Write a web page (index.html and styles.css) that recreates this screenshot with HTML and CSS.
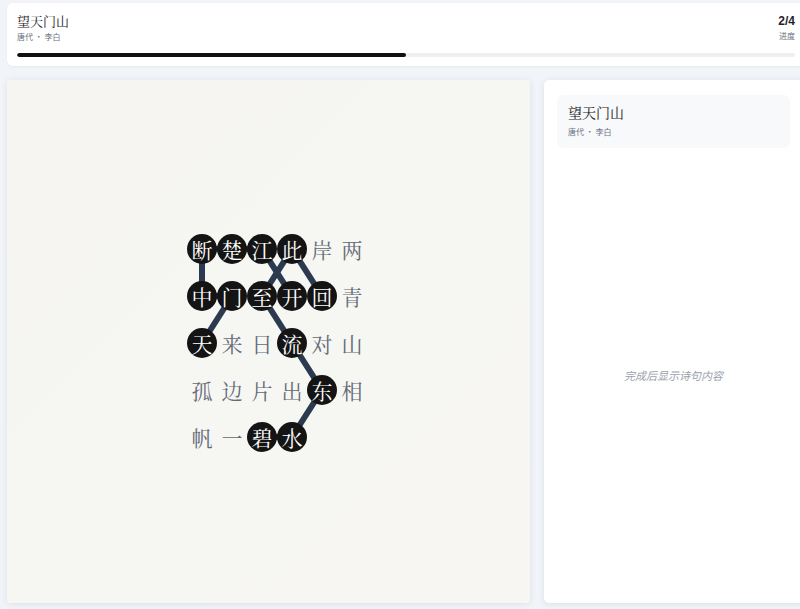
FILE: index.html
```html
<!DOCTYPE html>
<html lang="zh">
<head>
<meta charset="utf-8">
<link rel="stylesheet" href="styles.css">
</head>
<body>
<div class="page">
  <header class="top">
    <div class="top-row">
      <div class="info">
        <div class="title">望天门山</div>
        <div class="meta">唐代 · 李白</div>
      </div>
      <div class="progress-text">
        <div class="count">2/4</div>
        <div class="label">进度</div>
      </div>
    </div>
    <div class="track"><div class="fill" style="width:50%"></div></div>
  </header>
  <main class="main">
    <section class="board">
      <div class="grid-wrap">
        <svg class="links" width="180" height="218" viewBox="0 0 180 218">
          <polyline points="15,109 45,62 15,62 15,15 45,15 75,15 105,62" />
          <polyline points="75,203 105,203 135,156 105,109 75,62 105,15 135,62" />
        </svg>
        <div class="grid">
          <span class="cell on">断</span><span class="cell on">楚</span><span class="cell on">江</span><span class="cell on">此</span><span class="cell">岸</span><span class="cell">两</span>
          <span class="cell on">中</span><span class="cell on">门</span><span class="cell on">至</span><span class="cell on">开</span><span class="cell on">回</span><span class="cell">青</span>
          <span class="cell on">天</span><span class="cell">来</span><span class="cell">日</span><span class="cell on">流</span><span class="cell">对</span><span class="cell">山</span>
          <span class="cell">孤</span><span class="cell">边</span><span class="cell">片</span><span class="cell">出</span><span class="cell on">东</span><span class="cell">相</span>
          <span class="cell">帆</span><span class="cell">一</span><span class="cell on">碧</span><span class="cell on">水</span>
        </div>
      </div>
    </section>
    <aside class="side">
      <div class="poem-card">
        <div class="poem-title">望天门山</div>
        <div class="meta">唐代 · 李白</div>
      </div>
      <div class="placeholder">完成后显示诗句内容</div>
    </aside>
  </main>
</div>
</body>
</html>
```
FILE: styles.css
```css
html, body {
  margin: 0;
  padding: 0;
  overflow: hidden;
  background: #f1f4f8;
  font-family: "Noto Sans CJK SC", "Noto Sans", sans-serif;
}
.page {
  width: 813px;
  height: 609px;
  padding-top: 3px;
  box-sizing: border-box;
}
.top {
  margin: 0 7px;
  background: #ffffff;
  border-radius: 6px;
  padding: 9px 11px 9px 10px;
  box-shadow: 0 1px 3px rgba(30, 40, 60, 0.05);
}
.top-row {
  display: flex;
  justify-content: space-between;
  align-items: flex-start;
}
.title {
  font-family: "Noto Serif CJK SC", "Noto Sans CJK SC", serif;
  font-size: 13px;
  line-height: 18px;
  color: #1f2329;
}
.meta {
  font-size: 8px;
  line-height: 12px;
  color: #6b7280;
  margin-top: 1px;
}
.progress-text {
  text-align: right;
}
.count {
  font-family: "Liberation Sans", "Noto Sans", sans-serif;
  font-weight: bold;
  font-size: 12px;
  line-height: 18px;
  color: #1f2329;
}
.label {
  font-size: 8px;
  line-height: 12px;
  color: #6b7280;
  margin-top: 0;
}
.track {
  margin-top: 10px;
  height: 4px;
  border-radius: 2px;
  background: #eeeff1;
  overflow: hidden;
}
.fill {
  height: 100%;
  background: #111111;
  border-radius: 2px;
}
.main {
  display: flex;
  gap: 14px;
  margin: 14px 7px 0;
}
.board {
  width: 523px;
  height: 523px;
  flex: none;
  background: linear-gradient(135deg, #f6f5f1 0%, #f6f6f3 50%, #f7f6f3 100%);
  border-radius: 3px;
  box-shadow: 0 1px 6px rgba(40, 60, 90, 0.10);
  display: flex;
  align-items: center;
  justify-content: center;
  padding-left: 17px;
  padding-top: 3px;
  box-sizing: border-box;
}
.grid-wrap {
  position: relative;
  width: 180px;
  height: 218px;
}
.links {
  position: absolute;
  left: 0;
  top: 0;
}
.links polyline {
  fill: none;
  stroke: #2b3a4e;
  stroke-width: 6;
  stroke-linejoin: round;
  stroke-linecap: round;
}
.grid {
  position: relative;
  display: grid;
  grid-template-columns: repeat(6, 30px);
  grid-auto-rows: 30px;
  row-gap: 17px;
}
.cell {
  width: 30px;
  height: 30px;
  display: flex;
  align-items: center;
  justify-content: center;
  font-family: "Noto Serif CJK SC", "Noto Sans CJK SC", serif;
  font-size: 21px;
  line-height: 1;
  color: #626a76;
  border-radius: 50%;
}
.cell.on {
  background: #141414;
  color: #ffffff;
}
.side {
  width: 262px;
  height: 523px;
  flex: none;
  background: #ffffff;
  border-radius: 5px;
  box-shadow: 0 1px 6px rgba(40, 60, 90, 0.10);
  padding: 15px 16px 0 13px;
  box-sizing: border-box;
  display: flex;
  flex-direction: column;
}
.poem-card {
  background: #f7f9fb;
  border-radius: 6px;
  padding: 7px 11px 9px;
  height: 53px;
  box-sizing: border-box;
}
.poem-title {
  font-family: "Noto Serif CJK SC", "Noto Sans CJK SC", serif;
  font-size: 14px;
  line-height: 20px;
  color: #1f2329;
}
.poem-card .meta {
  margin-top: 4px;
}
.placeholder {
  flex: 1;
  display: flex;
  align-items: center;
  justify-content: center;
  font-style: italic;
  font-size: 11px;
  color: #9aa1ab;
  padding-bottom: 2px;
}
```
